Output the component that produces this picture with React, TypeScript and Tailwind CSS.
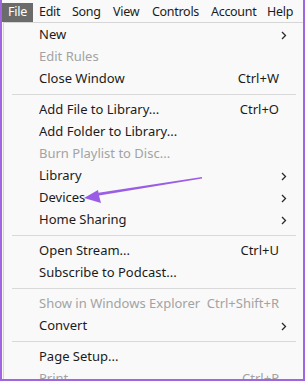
import React from 'react'

type Item = {
  label: string
  shortcut?: string
  sub?: boolean
  disabled?: boolean
}

const groups: Item[][] = [
  [
    { label: 'New', sub: true },
    { label: 'Edit Rules', disabled: true },
    { label: 'Close Window', shortcut: 'Ctrl+W' },
  ],
  [
    { label: 'Add File to Library...', shortcut: 'Ctrl+O' },
    { label: 'Add Folder to Library...' },
    { label: 'Burn Playlist to Disc...', disabled: true },
    { label: 'Library', sub: true },
    { label: 'Devices', sub: true },
    { label: 'Home Sharing', sub: true },
  ],
  [
    { label: 'Open Stream...', shortcut: 'Ctrl+U' },
    { label: 'Subscribe to Podcast...' },
  ],
  [
    { label: 'Show in Windows Explorer', shortcut: 'Ctrl+Shift+R', disabled: true },
    { label: 'Convert', sub: true },
  ],
  [
    { label: 'Page Setup...' },
    { label: 'Print', shortcut: 'Ctrl+P', disabled: true },
  ],
]

// menu bar items with their slot widths
const menus: { name: string; w: string }[] = [
  { name: 'Edit', w: 'w-[33px]' },
  { name: 'Song', w: 'w-[41px]' },
  { name: 'View', w: 'w-[39px]' },
  { name: 'Controls', w: 'w-[59px]' },
  { name: 'Account', w: 'w-[56px]' },
  { name: 'Help', w: 'w-[40px]' },
]

function Chevron() {
  return (
    <svg width="6" height="9" viewBox="0 0 6 9" className="absolute right-[16px] top-[7px]">
      <path d="M1 1 L4.5 4.5 L1 8" fill="none" stroke="#2a2a2a" strokeWidth="1.3" />
    </svg>
  )
}

function MenuRow({ item }: { item: Item }) {
  const color = item.disabled ? 'text-[#a3a3a3]' : 'text-[#1b1b1b]'
  return (
    <div className={`relative flex h-[22px] items-center pl-[35px] pr-[24px] ${color}`}>
      <span className="flex-1 whitespace-nowrap">{item.label}</span>
      {item.shortcut && <span className="whitespace-nowrap">{item.shortcut}</span>}
      {item.sub && <Chevron />}
    </div>
  )
}

export default function App() {
  return (
    <div
      className="relative h-[381px] w-[305px] overflow-hidden border-x-2 border-b-2 border-[#a065e0] bg-[#f9f9f9] text-[13px]"
      style={{ fontFamily: '"Noto Sans", "Liberation Sans", sans-serif' }}
    >
      {/* Menu bar */}
      <div className="flex h-[22px] items-stretch bg-[#f9f9f9] pt-[3px] text-[12.5px] tracking-[-0.3px] text-[#1b1b1b]">
        <div className="flex w-[31px] items-center justify-center bg-[#6b6b6b] text-white">File</div>
        {menus.map((m) => (
          <div key={m.name} className={`flex items-center whitespace-nowrap pl-[6px] ${m.w}`}>
            {m.name}
          </div>
        ))}
      </div>

      {/* Dropdown */}
      <div className="ml-[1px] border-l border-t border-[#d6d6d6] bg-[#f9f9f9] pt-[1px]">
        {groups.map((g, gi) => (
          <div key={gi}>
            {gi > 0 && (
              <div className="flex h-[9px] items-center pl-[8px] pr-[7px]">
                <div className="h-px w-full bg-[#d9d9d9]" />
              </div>
            )}
            {g.map((it) => (
              <MenuRow key={it.label} item={it} />
            ))}
          </div>
        ))}
      </div>

      {/* Annotation arrow */}
      <svg className="pointer-events-none absolute left-0 top-0" width="305" height="381">
        <polygon points="200,177 200,178.6 97,195.5 99,203 82,198 96,190 96.5,192.8" fill="#9b5de5" />
      </svg>
    </div>
  )
}
